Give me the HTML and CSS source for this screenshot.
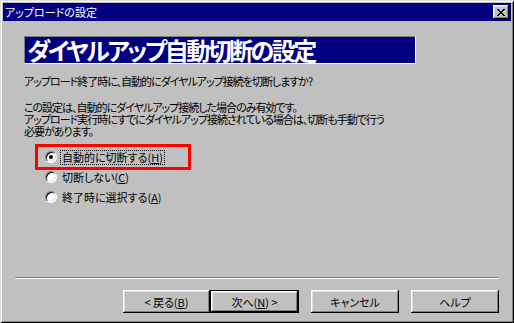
FILE: index.html
```html
<!DOCTYPE html>
<html>
<head>
	<meta charset="utf-8">
	<link rel="stylesheet" href="styles.css">
</head>
<body>
	<div class="window">
		<div class="titlebar">
			<span class="title">アップロードの設定</span>
			<button class="close">
				<svg width="8" height="7" viewBox="0 0 8 7" shape-rendering="crispEdges">
					<path fill="#000" d="M0 0h2v1H0z M6 0h2v1H6z M1 1h2v1H1z M5 1h2v1H5z M2 2h4v1H2z M3 3h2v1H3z M2 4h4v1H2z M1 5h2v1H1z M5 5h2v1H5z M0 6h2v1H0z M6 6h2v1H6z"/>
				</svg>
			</button>
		</div>
		<div class="content">
			<div class="heading">ダイヤルアップ自動切断の設定</div>
			<p class="question">アップロード終了時に、自動的にダイヤルアップ接続を切断しますか?</p>
			<p class="note">この設定は、自動的にダイヤルアップ接続した場合のみ有効です。<br>アップロード実行時にすでにダイヤルアップ接続されている場合は、切断も手動で行う<br>必要があります。</p>
			<div class="options">
				<div class="option marked">
					<span class="radio checked"></span>
					<span class="label focused">自動的に切断する(<u>H</u>)</span>
				</div>
				<div class="option">
					<span class="radio"></span>
					<span class="label">切断しない(<u>C</u>)</span>
				</div>
				<div class="option">
					<span class="radio"></span>
					<span class="label">終了時に選択する(<u>A</u>)</span>
				</div>
			</div>
		</div>
		<div class="separator"></div>
		<div class="buttons">
			<button class="btn back">&lt; 戻る(<u>B</u>)</button>
			<button class="btn default">次へ(<u>N</u>) &gt;</button>
			<button class="btn cancel">キャンセル</button>
			<button class="btn help">ヘルプ</button>
		</div>
	</div>
</body>
</html>
```

FILE: styles.css
```css
body {
	margin: 0;
	background-color: #C0C0C0;
	font-family: "Noto Sans CJK JP", sans-serif;
	font-size: 11px;
	font-feature-settings: "palt";
	color: #000000;
}
.window {
	width: 514px;
	height: 323px;
	box-sizing: border-box;
	display: flex;
	flex-direction: column;
	padding: 3px;
	background-color: #C0C0C0;
	box-shadow: inset 1px 1px 0 #DFDFDF, inset -1px -1px 0 #000000, inset 2px 2px 0 #FFFFFF, inset -2px -2px 0 #808080;
}
.titlebar {
	height: 18px;
	flex: none;
	display: flex;
	align-items: center;
	justify-content: space-between;
	padding: 0 2px;
	background-color: #000080;
	color: #FFFFFF;
}
.title {
	font-size: 11px;
	line-height: 18px;
}
.close {
	width: 16px;
	height: 14px;
	padding: 0;
	border: none;
	display: flex;
	align-items: center;
	justify-content: center;
	background-color: #C0C0C0;
	box-shadow: inset -1px -1px 0 #000000, inset 1px 1px 0 #FFFFFF, inset -2px -2px 0 #808080, inset 2px 2px 0 #DFDFDF;
}
.content {
	flex: 1;
	padding: 15px 21px 0 21px;
}
.heading {
	width: 392px;
	height: 28px;
	box-sizing: border-box;
	border: 1px solid;
	border-color: #808080 #FFFFFF #FFFFFF #808080;
	background-color: #000080;
	color: #FFFFFF;
	font-size: 24px;
	font-weight: bold;
	line-height: 26px;
	letter-spacing: -2.5px;
	padding-left: 2px;
	white-space: nowrap;
}
.question {
	margin: 11px 0 0 0;
	line-height: 12px;
	letter-spacing: -1px;
	white-space: nowrap;
}
.note {
	margin: 14px 0 0 0;
	line-height: 12px;
	letter-spacing: -1px;
	white-space: nowrap;
}
.options {
	margin: 10px 0 0 14px;
}
.option {
	width: 150px;
	height: 20px;
	box-sizing: border-box;
	display: flex;
	align-items: center;
	padding-left: 7px;
}
.option.marked {
	outline: 3px solid #FF0000;
}
.radio {
	position: relative;
	width: 12px;
	height: 12px;
	box-sizing: border-box;
	flex: none;
	border-radius: 50%;
	border: 1px solid;
	border-color: #808080 #FFFFFF #FFFFFF #808080;
	background-color: #FFFFFF;
	box-shadow: inset 1px 1px 0 #000000, inset -1px -1px 0 #DFDFDF;
	margin-right: 4px;
}
.radio.checked::after {
	content: "";
	position: absolute;
	left: 3px;
	top: 3px;
	width: 4px;
	height: 4px;
	border-radius: 50%;
	background-color: #000000;
}
.label {
	padding: 0 1px;
	line-height: 13px;
	white-space: nowrap;
}
.label.focused {
	outline: 1px dotted #000000;
}
.separator {
	flex: none;
	height: 0;
	margin: 0 13px 0 12px;
	border-top: 1px solid #808080;
	border-bottom: 1px solid #FFFFFF;
}
.buttons {
	flex: none;
	display: flex;
	justify-content: flex-end;
	margin: 11px 0 7px 0;
	padding-right: 12px;
}
.btn {
	height: 23px;
	padding: 0;
	border: none;
	background-color: #C0C0C0;
	font-family: "Noto Sans CJK JP", sans-serif;
	font-size: 11px;
	font-feature-settings: "palt";
	color: #000000;
	box-shadow: inset -1px -1px 0 #000000, inset 1px 1px 0 #FFFFFF, inset -2px -2px 0 #808080, inset 2px 2px 0 #DFDFDF;
}
.back {
	width: 87px;
}
.default {
	width: 89px;
	border: 1px solid #000000;
}
.cancel {
	width: 88px;
	margin-left: 12px;
}
.help {
	width: 88px;
	margin-left: 12px;
}
```
